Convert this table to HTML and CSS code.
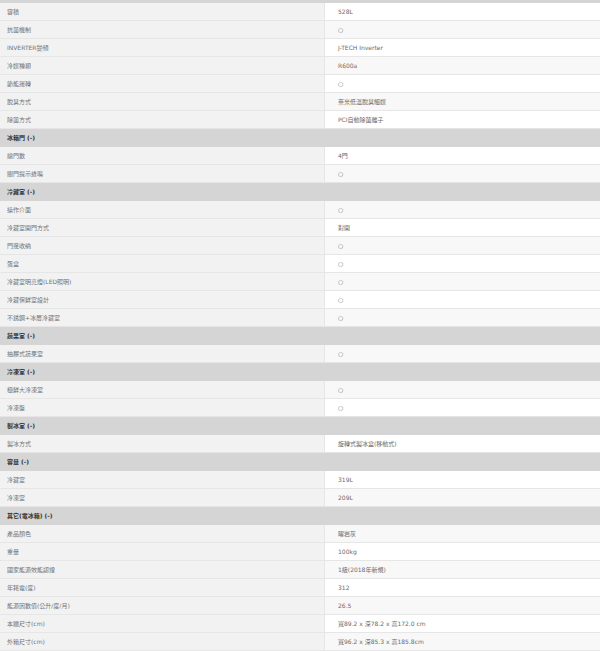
FILE: index.html
```html
<!DOCTYPE html>
<html lang="zh-Hant">
<head>
<meta charset="utf-8">
<title>規格</title>
<link rel="stylesheet" href="styles.css">
</head>
<body>
<div class="topband"></div>
<table class="spec">
<tbody>
<tr><td class="k">容積</td><td class="v">528L</td></tr>
<tr><td class="k">抗菌機制</td><td class="v">○</td></tr>
<tr><td class="k">INVERTER變頻</td><td class="v">J-TECH Inverter</td></tr>
<tr><td class="k">冷媒種類</td><td class="v">R600a</td></tr>
<tr><td class="k">節能運轉</td><td class="v">○</td></tr>
<tr><td class="k">脫臭方式</td><td class="v">奈米低溫脫臭觸媒</td></tr>
<tr><td class="k">除菌方式</td><td class="v">PCI自動除菌離子</td></tr>
<tr class="hd"><td colspan="2">冰箱門 (-)</td></tr>
<tr><td class="k">總門數</td><td class="v">4門</td></tr>
<tr><td class="k">關門提示蜂鳴</td><td class="v">○</td></tr>
<tr class="hd"><td colspan="2">冷藏室 (-)</td></tr>
<tr><td class="k">操作介面</td><td class="v">○</td></tr>
<tr><td class="k">冷藏室開門方式</td><td class="v">對開</td></tr>
<tr><td class="k">門邊收納</td><td class="v">○</td></tr>
<tr><td class="k">蛋盒</td><td class="v">○</td></tr>
<tr><td class="k">冷藏室明亮燈(LED照明)</td><td class="v">○</td></tr>
<tr><td class="k">冷藏保鮮室設計</td><td class="v">○</td></tr>
<tr><td class="k">不銹鋼+冰層冷藏室</td><td class="v">○</td></tr>
<tr class="hd"><td colspan="2">蔬果室 (-)</td></tr>
<tr><td class="k">抽屜式蔬果室</td><td class="v">○</td></tr>
<tr class="hd"><td colspan="2">冷凍室 (-)</td></tr>
<tr><td class="k">極鮮大冷凍室</td><td class="v">○</td></tr>
<tr><td class="k">冷凍盤</td><td class="v">○</td></tr>
<tr class="hd"><td colspan="2">製冰室 (-)</td></tr>
<tr><td class="k">製冰方式</td><td class="v">旋轉式製冰盒(移動式)</td></tr>
<tr class="hd"><td colspan="2">容量 (-)</td></tr>
<tr><td class="k">冷藏室</td><td class="v">319L</td></tr>
<tr><td class="k">冷凍室</td><td class="v">209L</td></tr>
<tr class="hd"><td colspan="2">其它(電冰箱) (-)</td></tr>
<tr><td class="k">產品顏色</td><td class="v">曜岩灰</td></tr>
<tr><td class="k">重量</td><td class="v">100kg</td></tr>
<tr><td class="k">國家能源效能認證</td><td class="v">1級(2018年新規)</td></tr>
<tr><td class="k">年耗電(度)</td><td class="v">312</td></tr>
<tr><td class="k">能源因數值(公升/度/月)</td><td class="v">26.5</td></tr>
<tr><td class="k">本體尺寸(cm)</td><td class="v">寬89.2 x 深78.2 x 高172.0 cm</td></tr>
<tr><td class="k">外箱尺寸(cm)</td><td class="v">寬96.2 x 深85.3 x 高185.8cm</td></tr>
</tbody>
</table>
</body>
</html>
```

FILE: styles.css
```css
html, body {
  margin: 0;
  padding: 0;
  background: #ffffff;
}
body {
  font-family: "DejaVu Sans", "Noto Sans CJK TC", sans-serif;
  font-size: 6px;
  color: #666666;
}
.topband {
  height: 3px;
  background: #d5d5d5;
}
.spec {
  width: 600px;
  border-collapse: collapse;
  table-layout: fixed;
}
.spec td {
  height: 17px;
  padding: 0;
  border-bottom: 1px solid #e6e6e6;
  line-height: 17px;
  white-space: nowrap;
  overflow: hidden;
}
.spec td.k {
  width: 317px;
  padding-left: 7px;
  background: #f2f2f2;
  border-right: 1px solid #e6e6e6;
  color: #737373;
}
.spec td.v {
  padding-left: 13px;
  background: #ffffff;
  color: #6a6a6a;
}
.spec tr:nth-child(even) td.v {
  background: #f8f8f8;
}
.spec tr.hd td {
  background: #d5d5d5;
  padding-left: 7px;
  font-weight: bold;
  color: #333333;
  border-bottom: 1px solid #d5d5d5;
}
```
